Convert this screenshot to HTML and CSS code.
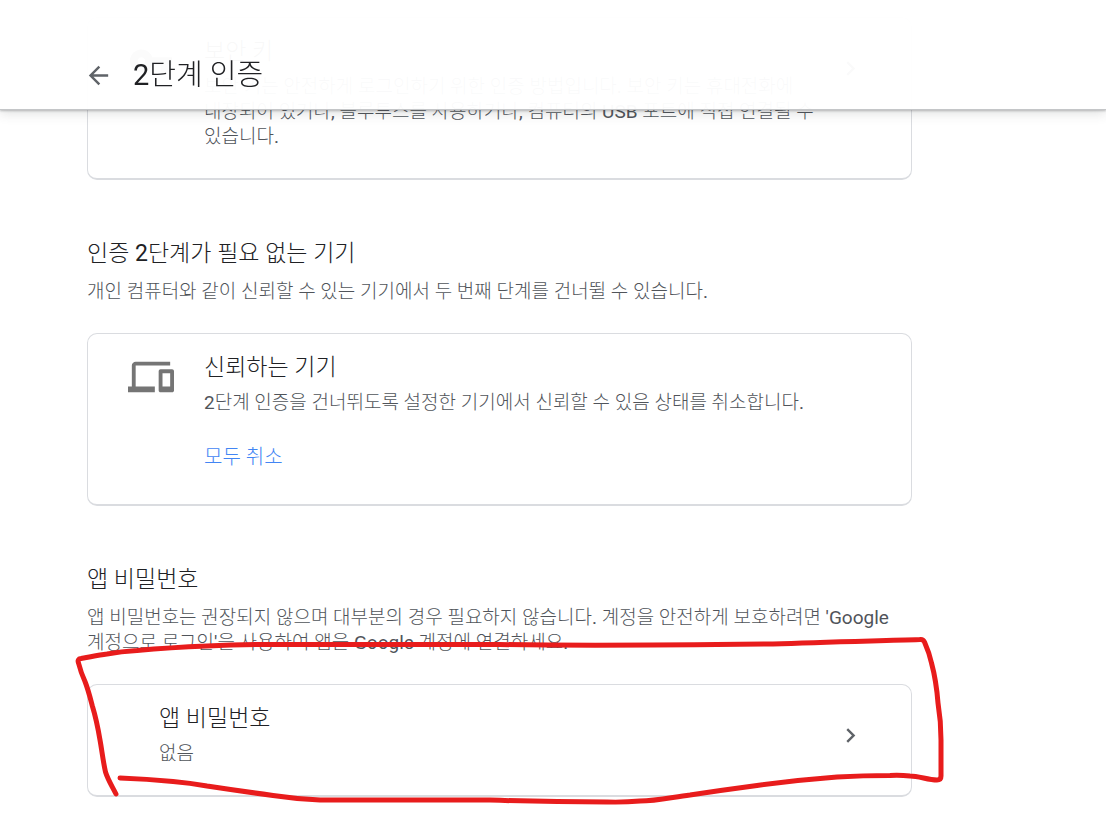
FILE: index.html
```html
<!DOCTYPE html>
<html lang="ko">
<head>
    <meta charset="utf-8">
    <title>2단계 인증</title>
    <link rel="stylesheet" href="styles.css">
</head>
<body>
    <header class="topbar">
        <button class="back" aria-label="뒤로">
            <svg viewBox="0 0 24 24"><path d="M20 11H7.83l5.59-5.59L12 4l-8 8 8 8 1.41-1.41L7.83 13H20v-2z"/></svg>
        </button>
        <h1>2단계 인증</h1>
    </header>

    <main class="content">
        <a class="card" href="#security-key">
            <svg class="card-icon" viewBox="0 0 24 24"><path d="M12.65 10C11.83 7.67 9.61 6 7 6c-3.31 0-6 2.69-6 6s2.69 6 6 6c2.61 0 4.83-1.67 5.65-4H17v4h4v-4h2v-4H12.65zM7 14c-1.1 0-2-.9-2-2s.9-2 2-2 2 .9 2 2-.9 2-2 2z"/></svg>
            <div class="card-body">
                <h3>보안 키</h3>
                <p>보안 키는 안전하게 로그인하기 위한 인증 방법입니다. 보안 키는 휴대전화에 내장되어 있거나, 블루투스를 사용하거나, 컴퓨터의 USB 포트에 직접 연결될 수 있습니다.</p>
            </div>
            <svg class="chevron" viewBox="0 0 24 24"><path d="M8.59 16.59L13.17 12 8.59 7.41 10 6l6 6-6 6z"/></svg>
        </a>

        <section class="group">
            <h2>인증 2단계가 필요 없는 기기</h2>
            <p>개인 컴퓨터와 같이 신뢰할 수 있는 기기에서 두 번째 단계를 건너뛸 수 있습니다.</p>
            <div class="card">
                <svg class="card-icon" viewBox="0 0 24 24"><path d="M4 6h18V4H4c-1.1 0-2 .9-2 2v11H0v3h14v-3H4V6zm19 2h-6c-.55 0-1 .45-1 1v10c0 .55.45 1 1 1h6c.55 0 1-.45 1-1V9c0-.55-.45-1-1-1zm-1 9h-4v-7h4v7z"/></svg>
                <div class="card-body">
                    <h3>신뢰하는 기기</h3>
                    <p>2단계 인증을 건너뛰도록 설정한 기기에서 신뢰할 수 있음 상태를 취소합니다.</p>
                    <button class="revoke">모두 취소</button>
                </div>
            </div>
        </section>

        <section class="group">
            <h2>앱 비밀번호</h2>
            <p>앱 비밀번호는 권장되지 않으며 대부분의 경우 필요하지 않습니다. 계정을 안전하게 보호하려면 'Google 계정으로 로그인'을 사용하여 앱을 Google 계정에 연결하세요.</p>
            <a class="card no-icon" href="#app-passwords">
                <div class="card-body">
                    <h3>앱 비밀번호</h3>
                    <p>없음</p>
                </div>
                <svg class="chevron" viewBox="0 0 24 24"><path d="M8.59 16.59L13.17 12 8.59 7.41 10 6l6 6-6 6z"/></svg>
                <!-- hand-drawn marker around the card -->
                <svg class="marker" viewBox="70 630 880 180" preserveAspectRatio="none">
                    <path d="M116 794C112 786 108 780 105.500 772C103 761 102 751 100 740C98 728 96 718 92.500 706.500C90 697 88 689 85 681.500C82 675 80 669 78.500 663Q77 659 81 658.500C90 657 98 655 107 654Q121 651.500 137 650.500Q170 647.500 207 646Q232 644.500 260 644.500H500C592 646 682 645 773 644C822 642 871 641 920 639.500Q923 639 924.500 642C928 650 930 656 931.500 663C935 676 937 690 938 703Q941 721 941 740V776Q941 780 937 780C928 780 919 776 910 776Q900 775 890 775.500Q863 775.500 837 777Q797 780 757 785.500Q723 790 690 795C673 797 657 801 640 801Q624 802.500 607 802Q548 802 490 800H320Q296 799 273 795.500Q240 791 207 786Q190 783 173 781.500Q147 779 120 778"/>
                </svg>
            </a>
        </section>
    </main>
</body>
</html>
```
FILE: styles.css
```css
* {
    box-sizing: border-box;
}
body {
    margin: 0;
    background-color: #fff;
    color: #50545a;
    font-family: Roboto, "Noto Sans CJK KR Light", "Noto Sans CJK KR", sans-serif;
    font-size: 19px;
    font-weight: 400;
    line-height: 25px;
    word-break: keep-all;
}
h1, h2, h3, p {
    margin: 0;
    font-weight: 400;
}
h1 {
    color: #202124;
    font-size: 29px;
    line-height: 36px;
}
h2, h3 {
    color: #202124;
    font-size: 23px;
    line-height: 32px;
}
button {
    padding: 0;
    border: none;
    background: none;
    font: inherit;
    cursor: pointer;
}
svg {
    display: block;
    flex-shrink: 0;
}
.topbar {
    position: fixed;
    top: 0;
    left: 0;
    right: 0;
    z-index: 2;
    display: flex;
    align-items: center;
    gap: 20px;
    padding: 57px 84px 16px;
    background-color: rgba(255, 255, 255, 0.97);
    border-bottom: 1px solid #c4c6c8;
    box-shadow: 0 1px 2px rgba(60, 64, 67, 0.3), 0 2px 12px rgba(60, 64, 67, 0.2);
}
.back svg {
    width: 29px;
    height: 29px;
    fill: #5f6368;
}
.content {
    padding: 17px 194px 20px 87px;
}
.card {
    position: relative;
    display: flex;
    align-items: flex-start;
    padding: 18px 46px 29px 40px;
    border: 1px solid #dadce0;
    border-bottom-width: 2px;
    border-radius: 10px;
    color: inherit;
    text-decoration: none;
}
.no-icon {
    padding-left: 71px;
}
.card-icon {
    width: 46px;
    height: 46px;
    margin-top: 2px;
    margin-right: 30px;
    fill: #757575;
}
.card-body {
    flex: 1;
}
.card-body h3 {
    margin-bottom: 6px;
}
.revoke {
    display: block;
    margin-top: 24px;
    color: #4285f4;
    font-size: 20px;
    line-height: 36px;
}
.chevron {
    width: 29px;
    height: 29px;
    margin-top: 18px;
    margin-left: 16px;
    fill: #5f6368;
}
.group {
    margin-top: 58px;
}
.group h2 {
    margin-bottom: 9px;
}
.group > p {
    margin-bottom: 29px;
}
.marker {
    position: absolute;
    top: -55px;
    left: -18px;
    width: calc(100% + 57px);
    height: 180px;
    fill: none;
    stroke: #e81c1c;
    stroke-width: 5;
    stroke-linecap: round;
    stroke-linejoin: round;
    pointer-events: none;
}
```
